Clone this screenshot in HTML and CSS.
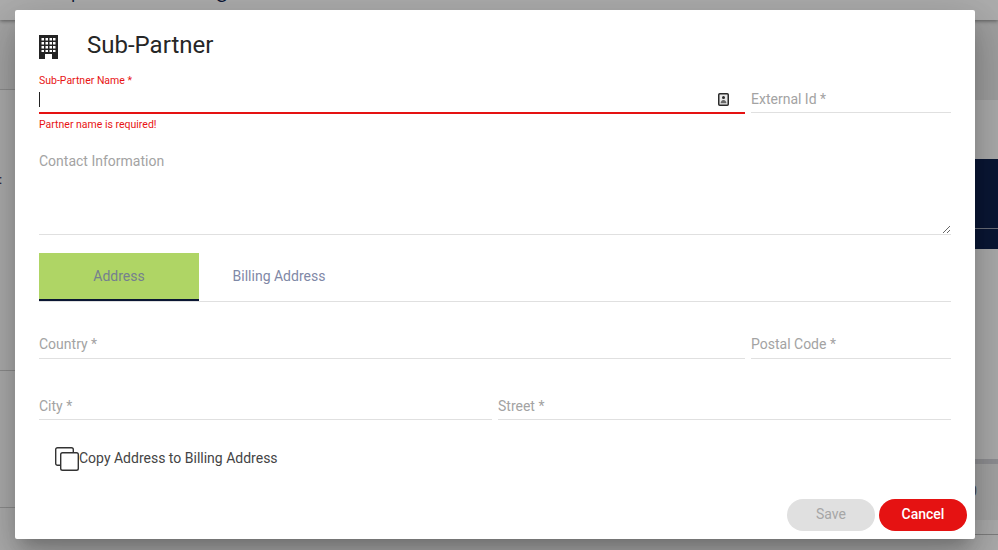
FILE: index.html
```html
<!DOCTYPE html>
<html lang="en">
<head>
<meta charset="utf-8">
<title>Sub-Partner</title>
<link rel="stylesheet" href="styles.css">
</head>
<body>
<div class="page">
  <header class="page-header"><h1 class="page-title">Sub-partner Listing</h1></header>
  <div class="page-body">
    <div class="side side-left">
      <div class="left-a"></div>
      <div class="left-b"><span class="left-mark">:</span></div>
      <div class="left-c"></div>
    </div>
    <div class="side side-right">
      <div class="right-a"></div>
      <div class="right-b"></div>
      <div class="right-navy"><div class="right-navy-top"></div></div>
      <div class="right-c"></div>
      <div class="right-band"></div>
      <div class="right-d"><span class="right-mark">0</span></div>
      <div class="right-e"></div>
    </div>
  </div>
</div>
<div class="backdrop"></div>
<main class="dialog">
  <div class="dialog-head">
    <svg class="head-icon" width="19" height="24" viewBox="0 0 19 24">
      <rect width="19" height="24" fill="#232323"/>
      <g fill="#fff">
        <rect x="2.5" y="3" width="2.5" height="2.5"/><rect x="6.5" y="3" width="2.5" height="2.5"/><rect x="10.5" y="3" width="2.5" height="2.5"/><rect x="14" y="3" width="2.5" height="2.5"/>
        <rect x="2.5" y="7" width="2.5" height="2.5"/><rect x="6.5" y="7" width="2.5" height="2.5"/><rect x="10.5" y="7" width="2.5" height="2.5"/><rect x="14" y="7" width="2.5" height="2.5"/>
        <rect x="2.5" y="11" width="2.5" height="2.5"/><rect x="6.5" y="11" width="2.5" height="2.5"/><rect x="10.5" y="11" width="2.5" height="2.5"/><rect x="14" y="11" width="2.5" height="2.5"/>
        <rect x="2.5" y="15" width="2.5" height="2"/><rect x="6.5" y="15" width="2.5" height="2"/><rect x="10.5" y="15" width="2.5" height="2"/><rect x="14" y="15" width="2.5" height="2"/>
        <rect x="6" y="19" width="7" height="5"/>
      </g>
    </svg>
    <h2 class="dialog-title">Sub-Partner</h2>
  </div>

  <div class="row row-name">
    <div class="field field-error field-grow">
      <div class="float-label">Sub-Partner Name *</div>
      <div class="error-input">
        <span class="caret"></span>
        <svg class="contact-icon" width="11" height="13" viewBox="0 0 11 13">
          <rect x="0.75" y="0.75" width="9.5" height="11.5" rx="1" fill="#e8e8e8" stroke="#2a2a2a" stroke-width="1.5"/>
          <circle cx="5.5" cy="4.6" r="1.5" fill="#2a2a2a"/>
          <path d="M2.6 10.2c0-2 1.2-3.3 2.9-3.3s2.9 1.3 2.9 3.3z" fill="#666"/>
        </svg>
      </div>
      <div class="error-text">Partner name is required!</div>
    </div>
    <div class="field field-side">
      <input class="input input-low" type="text" placeholder="External Id *">
    </div>
  </div>

  <textarea class="contact" placeholder="Contact Information"></textarea>

  <nav class="tabs">
    <div class="tab tab-active">Address</div>
    <div class="tab">Billing Address</div>
  </nav>

  <div class="row row-country">
    <div class="field field-grow"><input class="input" type="text" placeholder="Country *"></div>
    <div class="field field-side"><input class="input" type="text" placeholder="Postal Code *"></div>
  </div>

  <div class="row row-city">
    <div class="field field-half"><input class="input input-low" type="text" placeholder="City *"></div>
    <div class="field field-grow"><input class="input input-low" type="text" placeholder="Street *"></div>
  </div>

  <div class="copy">
    <svg class="copy-icon" width="24" height="24" viewBox="0 0 24 24" fill="none" stroke="#333" stroke-width="1.4">
      <rect x="0.7" y="0.7" width="17.6" height="17.6" rx="1.8"/>
      <rect x="5.7" y="5.7" width="17.6" height="17.6" rx="1.8" fill="#fff"/>
    </svg>
    <span class="copy-text">Copy Address to Billing Address</span>
  </div>

  <div class="actions">
    <button class="btn btn-save" type="button">Save</button>
    <button class="btn btn-cancel" type="button">Cancel</button>
  </div>
</main>
</body>
</html>
```

FILE: styles.css
```css
* { box-sizing: border-box; }
html, body { margin: 0; height: 100%; }
body {
  position: relative;
  width: 998px;
  height: 550px;
  overflow: hidden;
  background: #fff;
  font-family: Roboto, "Liberation Sans", sans-serif;
}

/* page behind the dialog */
.page { height: 550px; display: flex; flex-direction: column; }
.page-header {
  height: 20px;
  flex: none;
  overflow: hidden;
  background: #fff;
  box-shadow: 0 1px 4px rgba(0, 0, 0, .45);
  position: relative;
  z-index: 1;
}
.page-title {
  margin: -27px 0 0 21px;
  font-size: 25px;
  line-height: 32px;
  font-weight: 300;
  color: #10234f;
  white-space: nowrap;
}
.page-body { flex: 1; display: flex; justify-content: space-between; }
.side { display: flex; flex-direction: column; }
.side-left { width: 15px; }
.side-right { width: 23px; }
.left-a { height: 70px; border-bottom: 1px solid #d0d0d0; background: #f4f4f4; }
.left-b { height: 281px; border-bottom: 1px solid #d0d0d0; background: #fff; position: relative; }
.left-c { height: 137px; border-bottom: 1px solid #d0d0d0; }
.left-mark {
  position: absolute;
  left: -1px;
  top: 82px;
  font-size: 13px;
  line-height: 16px;
  color: #10234f;
}
.right-a { height: 80px; background: #ececec; }
.right-b { height: 59px; background: #fff; }
.right-navy { height: 90px; background: #10234f; }
.right-navy-top { height: 70px; border-bottom: 1px solid #a0a5b5; }
.right-c { height: 210px; background: #fff; }
.right-band { height: 5px; background: #d4d4da; }
.right-d { height: 56px; background: #f4f4f4; overflow: hidden; white-space: nowrap; }
.right-mark { display: block; margin: 18px 0 0 -6px; font-size: 14px; line-height: 18px; color: #666; }
.right-e { height: 15px; background: #fff; border-bottom: 1px solid #bbb; }

.backdrop { position: absolute; inset: 0; background: rgba(0, 0, 0, .32); z-index: 2; }

/* dialog */
.dialog {
  position: absolute;
  left: 15px;
  top: 10px;
  width: 960px;
  height: 529px;
  z-index: 3;
  background: #fff;
  border-radius: 2px;
  padding: 25px 24px 0;
  display: flex;
  flex-direction: column;
  box-shadow: 0 11px 15px -7px rgba(0, 0, 0, .2), 0 24px 38px 3px rgba(0, 0, 0, .14), 0 9px 46px 8px rgba(0, 0, 0, .12);
}
.dialog-head { display: flex; align-items: center; height: 23px; }
.head-icon { flex: none; }
.dialog-title {
  margin: -4px 0 0 29px;
  font-size: 24px;
  line-height: 32px;
  font-weight: 400;
  color: #262626;
}

.row { display: flex; gap: 6px; }
.row-name { margin-top: 16px; }
.row-country { margin-top: 28px; }
.row-city { margin-top: 32px; }
.field { min-width: 0; }
.field-grow { flex: 1; }
.field-side { width: 200px; flex: none; align-self: flex-start; }
.field-half { width: 453px; flex: none; }
.row-name .field-side { margin-top: 10px; }

.float-label { font-size: 10.5px; line-height: 14px; color: #e81414; }
.error-input {
  height: 23px;
  margin-top: 3px;
  border-bottom: 2px solid #e51212;
  display: flex;
  align-items: flex-start;
  justify-content: space-between;
  padding-right: 16px;
}
.caret { width: 1px; height: 15px; margin-top: 1px; background: #222; }
.contact-icon { margin-top: 2px; }
.error-text { margin-top: 4px; font-size: 10.5px; line-height: 14px; color: #e81414; }

.input {
  display: block;
  width: 100%;
  height: 29px;
  padding: 0;
  border: 0;
  border-bottom: 1px solid #e0e0e0;
  outline: 0;
  background: transparent;
  font-family: inherit;
  font-size: 14px;
}
.input-low { padding-top: 2px; }
.input::placeholder, .contact::placeholder { color: #a3a3a3; opacity: 1; }

.contact {
  display: block;
  width: 100%;
  height: 88px;
  margin-top: 15px;
  padding: 5px 0 0;
  border: 0;
  border-bottom: 1px solid #e0e0e0;
  outline: 0;
  background: transparent;
  font-family: inherit;
  font-size: 14px;
  line-height: 18px;
  resize: vertical;
  flex: none;
}

.tabs { display: flex; height: 49px; margin-top: 18px; border-bottom: 1px solid #e0e0e0; flex: none; }
.tab {
  width: 160px;
  height: 48px;
  padding-bottom: 2px;
  display: flex;
  align-items: center;
  justify-content: center;
  font-size: 14px;
  font-weight: 400;
  color: #7f88a6;
}
.tab-active { background: #afd565; padding-bottom: 0; border-bottom: 2px solid #0a1633; color: #75808f; }

.copy { display: flex; align-items: center; height: 24px; margin: 27px 0 0 16px; }
.copy-icon { flex: none; }
.copy-text { font-size: 14px; line-height: 18px; color: #444; margin-top: -2px; }

.actions { display: flex; justify-content: flex-end; gap: 4px; margin: auto -16px 8px 0; }
.btn {
  width: 88px;
  height: 32px;
  padding: 0 0 2px;
  border: 0;
  border-radius: 16px;
  font-family: inherit;
  font-size: 14px;
}
.btn-save { background: #e0e0e0; color: #a6a6a6; }
.btn-cancel { background: #e51212; color: #fff; font-weight: 500; }
```
